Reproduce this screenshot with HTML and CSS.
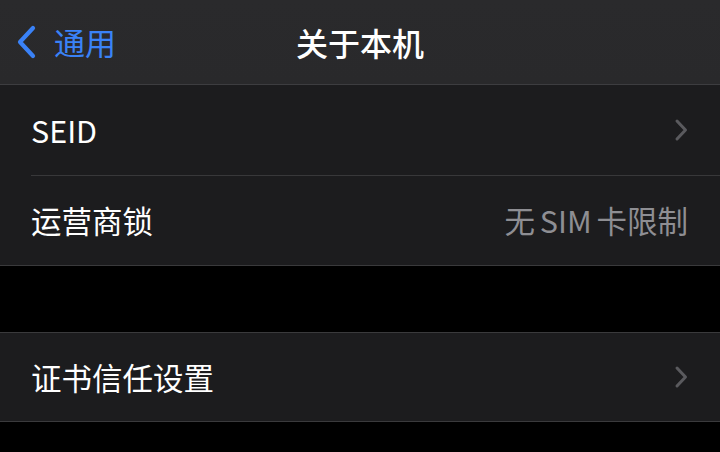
FILE: index.html
```html
<!DOCTYPE html>
<html lang="zh">
<head>
<meta charset="utf-8">
<link rel="stylesheet" href="styles.css">
</head>
<body>
<header class="nav">
  <div class="back">
    <svg class="back-icon" width="22" height="34" viewBox="0 0 22 34"><path d="M18 3 L5 17 L18 31" fill="none" stroke="#3a82f7" stroke-width="4.2" stroke-linecap="round" stroke-linejoin="round"/></svg>
    <span class="back-label">通用</span>
  </div>
  <div class="title">关于本机</div>
</header>
<section class="group first">
  <div class="row">
    <span class="label">SEID</span>
    <svg class="chev" width="14" height="24" viewBox="0 0 14 24"><path d="M3 3 L11.5 12 L3 21" fill="none" stroke="#5a5a5e" stroke-width="3" stroke-linecap="round" stroke-linejoin="round"/></svg>
  </div>
  <div class="row">
    <span class="label">运营商锁</span>
    <span class="value">无 SIM 卡限制</span>
  </div>
</section>
<section class="group second">
  <div class="row short">
    <span class="label">证书信任设置</span>
    <svg class="chev" width="14" height="24" viewBox="0 0 14 24"><path d="M3 3 L11.5 12 L3 21" fill="none" stroke="#5a5a5e" stroke-width="3" stroke-linecap="round" stroke-linejoin="round"/></svg>
  </div>
</section>
</body>
</html>
```
FILE: styles.css
```css
html, body {
  margin: 0;
  padding: 0;
  background: #000;
  width: 720px;
  height: 452px;
  overflow: hidden;
  font-family: "Noto Sans CJK SC", "Noto Sans", sans-serif;
}
.nav {
  height: 84px;
  border-bottom: 1px solid #3d3d40;
  background: linear-gradient(#2a2a2c, #29292b);
  display: flex;
  align-items: center;
  position: relative;
}
.back {
  display: flex;
  align-items: center;
  padding-left: 15px;
  gap: 17px;
  margin-top: -1px;
}
.back-label {
  color: #3a82f7;
  font-size: 31px;
  line-height: 1;
}
.title {
  position: absolute;
  left: 0;
  right: 0;
  top: 0;
  bottom: 0;
  display: flex;
  align-items: center;
  justify-content: center;
  color: #fff;
  font-size: 32px;
  font-weight: 500;
  pointer-events: none;
  margin-top: -1px;
}
.group {
  background: #1c1c1e;
  border-bottom: 1px solid #3a3a3c;
}
.second {
  margin-top: 66px;
  border-top: 1px solid #3a3a3c;
}
.row {
  height: 90px;
  display: flex;
  align-items: center;
  justify-content: space-between;
  margin-left: 31px;
  padding-right: 32px;
  color: #fff;
}
.row + .row {
  border-top: 1px solid #38383a;
  height: 89px;
}
.row.short {
  height: 88px;
}
.label {
  font-size: 30.5px;
  line-height: 1;
  color: #fff;
}
.value {
  font-size: 30.5px;
  line-height: 1;
  color: #8e8e93;
  word-spacing: -2px;
}
.chev {
  display: block;
}
```
